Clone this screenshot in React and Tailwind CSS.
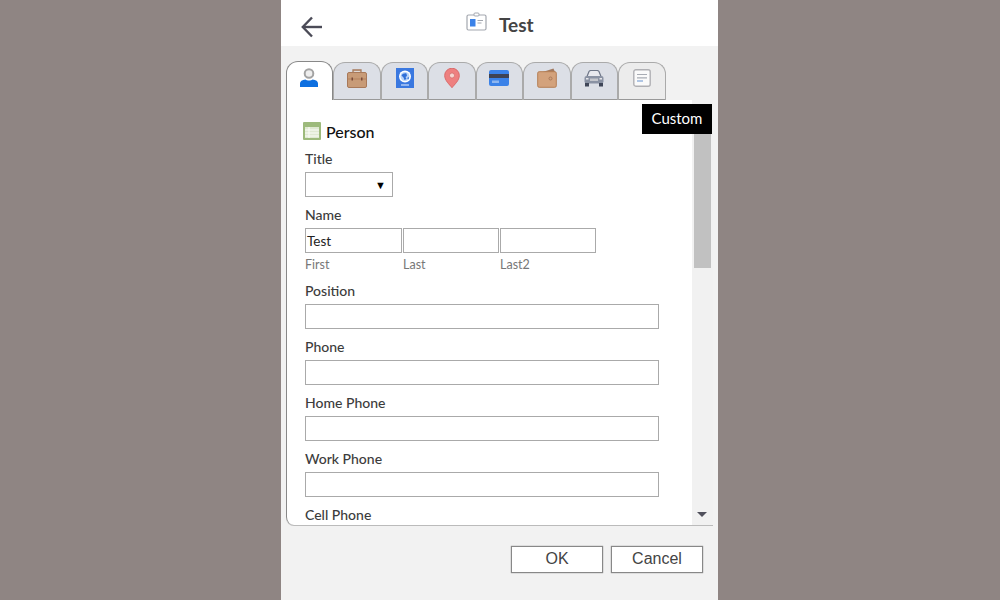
import React from 'react';

const lato = "font-['Lato','Open_Sans',sans-serif]";

const BackIcon = () => (
  <svg width="24" height="24" viewBox="0 0 24 24" fill="none" stroke="#4b4b57" strokeWidth="2.4">
    <path d="M22 13H3.5" />
    <path d="M12 3.5L2.8 13l9.2 9.5" />
  </svg>
);

const CardIcon = () => (
  <svg width="21" height="19" viewBox="0 0 21 19" fill="none">
    <rect x="1" y="3" width="19" height="15" rx="1.500" fill="#fff" stroke="#a3a7af" strokeWidth="1.200" />
    <rect x="8" y="1" width="5" height="3" rx="1" fill="#fff" stroke="#a3a7af" />
    <rect x="4" y="7" width="5.500" height="7.500" fill="#3b82e8" />
    <path d="M11.500 8.500h5.500M11.500 11h4" stroke="#a3a7af" strokeWidth="1.200" />
  </svg>
);

const PersonTab = () => (
  <svg width="18" height="19" viewBox="0 0 18 19">
    <circle cx="9" cy="5.500" r="4.300" fill="#eeeeee" stroke="#a3a3a3" strokeWidth="2" />
    <path d="M0 19v-3.500C0 13 2 12 5.500 11.500 7 12.800 11 12.800 12.500 11.500 16 12 18 13 18 15.500V19Z" fill="#0d6fe0" />
  </svg>
);

const BriefcaseTab = () => (
  <svg width="20" height="19" viewBox="0 0 20 19">
    <path d="M6 4V1h8v3" fill="#e4d2c0" stroke="#a57a5c" strokeWidth="1.300" />
    <rect x="7.500" y="2.300" width="5" height="1.700" fill="#dcdfe6" />
    <rect x="0.500" y="3.500" width="19" height="15" rx="1.500" fill="#c89b77" stroke="#a8795a" />
    <path d="M1 10h18" stroke="#b3825f" />
    <rect x="4.500" y="8.500" width="1.500" height="3" fill="#7a4b3a" />
    <rect x="14" y="8.500" width="1.500" height="3" fill="#7a4b3a" />
  </svg>
);

const PassportTab = () => (
  <svg width="18" height="20" viewBox="0 0 18 20">
    <rect width="18" height="20" fill="#3a78e0" />
    <circle cx="9" cy="8.500" r="6" fill="#ffffff" />
    <circle cx="9" cy="8.500" r="4.500" fill="#b9d3f7" />
    <path d="M5.500 7.500C6.500 5.500 9 5 10.500 5.500L11 8 9.500 9 10.500 11 8.500 12 7.500 9.500Z" fill="#2f6fd8" />
    <path d="M11 10l2-1-.5 2.500z" fill="#2f6fd8" />
    <path d="M5 17h8" stroke="#cfe0f8" strokeWidth="1.200" />
  </svg>
);

const PinTab = () => (
  <svg width="16" height="20" viewBox="0 0 16 20">
    <path d="M8 19.700C5.500 16.500 .7 12.500 .7 7.500a7.300 7.300 0 0 1 14.600 0C15.300 12.500 10.500 16.500 8 19.700Z" fill="#ee8080" stroke="#d96a6a" />
    <circle cx="8" cy="7.500" r="2.500" fill="#f6d5d0" stroke="#c96060" strokeWidth=".6" />
  </svg>
);

const CreditCardTab = () => (
  <svg width="20" height="16" viewBox="0 0 20 16">
    <rect width="20" height="16" rx="2" fill="#3b82e8" />
    <rect y="4" width="20" height="4" fill="#3f4354" />
    <rect x="3" y="10.500" width="7" height="2.500" fill="#8db6f0" />
  </svg>
);

const WalletTab = () => (
  <svg width="20" height="20" viewBox="0 0 20 20">
    <path d="M1 5.500L16.500 .5 18 4Z" fill="#a27a60" />
    <rect x=".7" y="3.700" width="18.600" height="15.600" rx="1.500" fill="#d3a27c" stroke="#b57f55" />
    <circle cx="13.500" cy="10.500" r="1.500" fill="none" stroke="#a8795a" />
  </svg>
);

const CarTab = () => (
  <svg width="20" height="17" viewBox="0 0 20 17">
    <path d="M3 6.500L5 1.500C5.400 .8 6 .500 7 .500h6c1 0 1.600.3 2 1l2 5" fill="#e8e9ee" stroke="#6e7687" strokeWidth="1.200" />
    <rect x=".5" y="6" width="19" height="7.500" rx="2" fill="#8a92a3" />
    <rect x="6" y="8.500" width="8" height="2.500" fill="#c4c6cc" />
    <rect x="2" y="8" width="2.500" height="1.500" fill="#e6e6ea" />
    <rect x="15.500" y="8" width="2.500" height="1.500" fill="#e6e6ea" />
    <rect x="1" y="13" width="4" height="3.500" fill="#3f4658" />
    <rect x="15" y="13" width="4" height="3.500" fill="#3f4658" />
  </svg>
);

const NoteTab = () => (
  <svg width="18" height="18" viewBox="0 0 18 18" fill="none">
    <rect x=".8" y=".8" width="16.400" height="16.400" rx="2" fill="#fafafa" stroke="#b0b0b4" strokeWidth="1.400" />
    <path d="M4 5.500h10M4 8.800h10" stroke="#a8acb4" strokeWidth="1.200" />
    <path d="M4 12h6" stroke="#7fa3d6" strokeWidth="1.200" />
  </svg>
);

const SheetIcon = () => (
  <svg width="18" height="18" viewBox="0 0 18 18">
    <rect width="18" height="18" rx="1" fill="#9dba7c" />
    <rect x="2" y="5" width="14" height="11" fill="#dfe8d2" />
    <path d="M2 8h14M2 11h14M2 14h14M6 5v11" stroke="#fbfcf8" strokeWidth="1" />
  </svg>
);

const tabs = [
  { icon: <PersonTab />, width: 'w-[47px]', style: 'bg-white border-[#888] h-[39px] z-10 pr-[2px] pb-[8px]' },
  { icon: <BriefcaseTab />, width: 'w-[48px]', style: 'bg-[#dcdfe6] border-[#aaa] h-[38px] pb-[7px]' },
  { icon: <PassportTab />, width: 'w-[47px]', style: 'bg-[#dcdfe6] border-[#aaa] h-[38px] pb-[7px]' },
  { icon: <PinTab />, width: 'w-[48px]', style: 'bg-[#dcdfe6] border-[#aaa] h-[38px] pb-[7px]' },
  { icon: <CreditCardTab />, width: 'w-[47px]', style: 'bg-[#dcdfe6] border-[#aaa] h-[38px] pb-[7px] pr-[2px]' },
  { icon: <WalletTab />, width: 'w-[48px]', style: 'bg-[#dcdfe6] border-[#aaa] h-[38px] pb-[7px]' },
  { icon: <CarTab />, width: 'w-[47px]', style: 'bg-[#dcdfe6] border-[#aaa] h-[38px] pb-[6px] pr-[2px]' },
  { icon: <NoteTab />, width: 'w-[48px]', style: 'bg-[#ececec] border-[#aaa] h-[38px] pb-[7px]' },
];

const Label = ({ children }) => (
  <div className="h-[23px] text-[14px] leading-[18px] pt-[1px] font-medium text-[#3c3c3c]">{children}</div>
);

const Box = ({ className = '', value = '' }) => (
  <div className={`h-[25px] border border-[#aaa] bg-white px-[1px] text-[13.5px] leading-[24px] text-[#222] ${className}`}>
    {value}
  </div>
);

const Field = ({ label }) => (
  <div className="mb-[8px]">
    <Label>{label}</Label>
    <Box className="w-[354px]" />
  </div>
);

export default function App() {
  return (
    <div className={`w-[1000px] h-[600px] bg-[#8f8583] flex justify-center overflow-hidden ${lato}`}>
      <div className="w-[437px] ml-[-1px] h-full bg-[#f2f2f2] flex flex-col">
        {/* Header */}
        <div className="h-[46px] bg-white relative flex items-center pl-[185px] shrink-0">
          <div className="absolute left-[19px] top-[14px]"><BackIcon /></div>
          <span className="mt-[-4px]"><CardIcon /></span>
          <span className="ml-[12px] mt-[4px] text-[19px] font-bold text-[#444] leading-[24px]">Test</span>
        </div>

        {/* Tabs */}
        <div className="flex items-end h-[54px] pl-[5px] shrink-0 relative z-10">
          {tabs.map((tab, i) => (
            <div
              key={i}
              className={`${tab.width} ${tab.style} border-x border-t border-b-0 rounded-t-[12px] flex items-center justify-center shadow-[inset_0_-1px_0_#999] first:shadow-none`}
            >
              {tab.icon}
            </div>
          ))}
        </div>

        {/* Form panel */}
        <div className="relative ml-[5px] w-[427px] h-[426px] shrink-0 flex border-b border-b-[#bbb] rounded-bl-[8px]">
          <div className="flex-1 bg-white border-l border-l-[#888] rounded-bl-[8px] overflow-hidden pl-[18px] pt-[22px]">
            <div className="flex items-center gap-[5px] h-[20px] mb-[7px] ml-[-2px]">
              <span className="mt-[-2px]"><SheetIcon /></span>
              <span className="text-[16px] font-medium text-[#111]">Person</span>
            </div>
            <div className="mb-[8px]">
              <Label>Title</Label>
              <div className="w-[88px] h-[25px] border border-[#aaa] bg-white flex items-center justify-end pr-[6px]">
                <span className="text-[11px] text-black leading-none">▼</span>
              </div>
            </div>
            <Label>Name</Label>
            <div className="flex gap-[1px]">
              <Box className="w-[97px]" value="Test" />
              <Box className="w-[96px]" />
              <Box className="w-[96px]" />
            </div>
            <div className="flex gap-[1px] h-[28px] pt-[4px] text-[12.5px] leading-[16px] text-[#777]">
              <span className="w-[97px]">First</span>
              <span className="w-[96px]">Last</span>
              <span className="w-[96px]">Last2</span>
            </div>
            <Field label="Position" />
            <Field label="Phone" />
            <Field label="Home Phone" />
            <Field label="Work Phone" />
            <Field label="Cell Phone" />
          </div>

          {/* Scrollbar */}
          <div className="w-[21px] bg-[#f1f1f1] flex flex-col items-center pt-[17px]">
            <div className="w-[17px] h-[151px] bg-[#c1c1c1]" />
            <div className="flex-1" />
            <svg width="10" height="5" viewBox="0 0 10 5" className="mb-[8px] mr-[2px]">
              <path d="M0 0h10L5 5Z" fill="#50505c" />
            </svg>
          </div>

          {/* Tooltip */}
          <div className="absolute right-[1px] top-[4px] w-[70px] h-[30px] bg-black text-white text-[15px] leading-[29px] text-center">
            Custom
          </div>
        </div>

        {/* Buttons */}
        <div className="flex justify-end gap-[8px] pt-[20px] pr-[15px] font-['Liberation_Sans',Arial,sans-serif]">
          <button className="w-[92px] h-[27px] pb-[2px] bg-white border border-[#888] shadow-[0_0_1px_#777] text-[16px] leading-[22px] text-[#444]">OK</button>
          <button className="w-[92px] h-[27px] pb-[2px] bg-white border border-[#888] shadow-[0_0_1px_#777] text-[16px] leading-[22px] text-[#444]">Cancel</button>
        </div>
      </div>
    </div>
  );
}
